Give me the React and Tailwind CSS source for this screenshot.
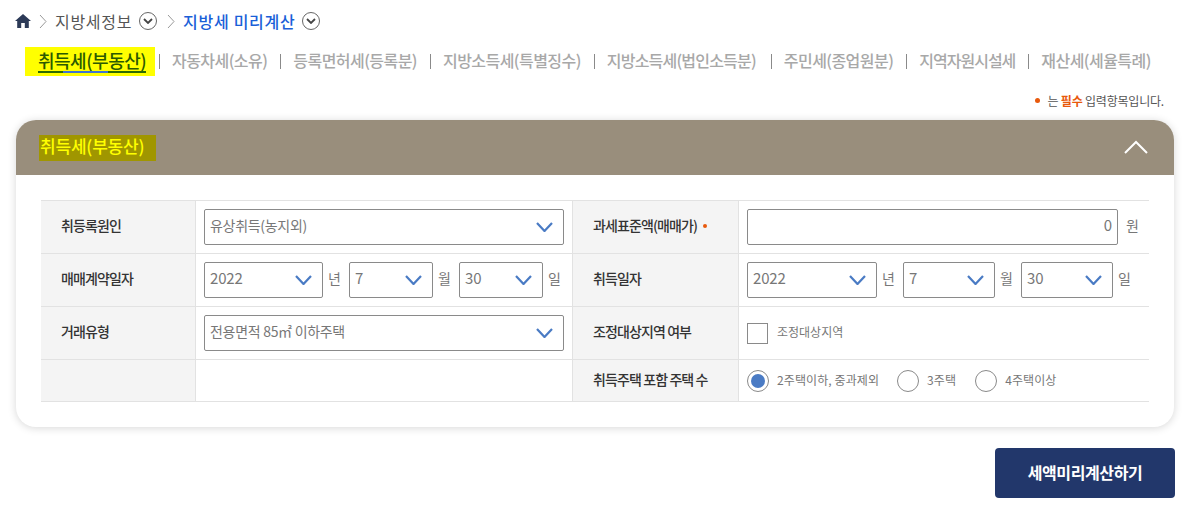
import React from 'react';

const tabs = [
  { label: '자동차세(소유)', cls: 'mr-[9px] tracking-[-0.55px]' },
  { label: '등록면허세(등록분)', cls: 'mr-[9px] tracking-[-0.55px]' },
  { label: '지방소득세(특별징수)', cls: 'mr-[9px] tracking-[-0.55px]' },
  { label: '지방소득세(법인소득분)', cls: 'mr-[11px] tracking-[-0.8px]' },
  { label: '주민세(종업원분)', cls: 'mr-[9px] tracking-[-0.55px]' },
  { label: '지역자원시설세', cls: 'mr-[9px] tracking-[-1px]' },
  { label: '재산세(세율특례)', cls: 'mr-[9px] tracking-[-0.55px]' },
];

function Crumb({ children, active, className }) {
  return (
    <div className={`flex items-center ${className}`}>
      <svg viewBox="0 0 8 15" className="w-2 h-[15px] fill-none stroke-[#999]" strokeWidth="1">
        <path d="M1 1 L7 7.5 L1 14" />
      </svg>
      <span className={active ? 'ml-2 text-[16px] font-medium tracking-[0.7px] text-[#1a5fd8]' : 'ml-2 text-[16px] tracking-[0.7px] text-[#555]'}>{children}</span>
      <span className="ml-[7px] w-[18px] h-[18px] rounded-full border border-[#666] flex items-center justify-center">
        <svg viewBox="0 0 10 6" className="w-[10px] h-[6px] fill-none stroke-[#444]" strokeWidth="1.8">
          <path d="M1 1 L5 5 L9 1" />
        </svg>
      </span>
    </div>
  );
}

function Select({ value, className, digits }) {
  return (
    <div className={`h-9 flex items-center justify-between border border-[#8a8a8a] rounded-[2px] pl-[5px] pr-[10px] bg-white ${className}`}>
      <span className={digits ? 'pb-[3px] text-[15px] tracking-[-0.2px] text-[#777]' : 'pb-[3px] text-[14px] tracking-[-0.3px] text-[#777]'}>{value}</span>
      <svg viewBox="0 0 17 10" className="w-[17px] h-[10px] fill-none stroke-[#4a7bc4]" strokeWidth="2.2">
        <path d="M1 1 L8.5 9 L16 1" />
      </svg>
    </div>
  );
}

function Label({ children }) {
  return (
    <div className="bg-[#f4f4f4] flex items-center pl-5 pb-[3px] border-b border-r border-[#e2e2e2] text-[14px] font-medium tracking-[-0.9px] text-[#333]">
      {children}
    </div>
  );
}

function Cell({ children, last }) {
  return <div className={`flex items-center pl-2 border-b border-[#e2e2e2] ${last ? '' : 'pr-2 border-r'}`}>{children}</div>;
}

function Unit({ children }) {
  return <span className="pb-[3px] text-[14px] text-[#777] shrink-0">{children}</span>;
}

function DateSelect({ wide }) {
  return (
    <div className="flex items-center w-full">
      <Select digits value="2022" className={wide ? 'w-[130px]' : 'w-[119px]'} />
      <span className="flex ml-[5px] w-[21px]"><Unit>년</Unit></span>
      <Select digits value="7" className={wide ? 'w-[92px]' : 'w-[84px]'} />
      <span className="flex ml-[5px] w-[21px]"><Unit>월</Unit></span>
      <Select digits value="30" className={wide ? 'w-[92px]' : 'w-[84px]'} />
      <span className="flex ml-[5px]"><Unit>일</Unit></span>
    </div>
  );
}

function Radio({ label, checked, className }) {
  return (
    <div className={`flex items-center ${className}`}>
      <span className="w-[22px] h-[22px] rounded-full border border-[#8a8a8a] flex items-center justify-center bg-white">
        {checked && <span className="w-[14px] h-[14px] rounded-full bg-[#4a7bc4]" />}
      </span>
      <span className="ml-2 pb-[2px] text-[12px] tracking-[0.1px] text-[#777]">{label}</span>
    </div>
  );
}

export default function App() {
  return (
    <div className="w-[1192px] h-[517px] overflow-hidden bg-white font-['Noto_Sans_CJK_KR','Noto_Sans',sans-serif]">
      {/* Breadcrumb */}
      <div className="h-[42px] pl-[15px] flex items-center">
        <svg viewBox="0 0 16 14" className="w-4 h-[14px] fill-[#2c3a57]">
          <path d="M8 0 L16 7 L13.8 7 L13.8 14 L9.8 14 L9.8 9 L6.2 9 L6.2 14 L2.2 14 L2.2 7 L0 7 Z" />
        </svg>
        <Crumb className="ml-2">지방세정보</Crumb>
        <Crumb active className="ml-[10px]">지방세 미리계산</Crumb>
      </div>

      {/* Tabs */}
      <div className="h-[38px] pl-[25px] flex items-center">
        <div className="h-[29px] w-[130px] pl-[13px] bg-[#ffff00] flex items-center">
          <div className="w-[108px]">
            <div className="text-[18px] font-medium tracking-[-0.5px] text-[#2c5a00] leading-[21px] whitespace-nowrap">취득세(부동산)</div>
            <div className="flex h-[2px]">
              <span className="w-[25px] bg-[#2c6a00]" />
              <span className="w-[45px] bg-[#3f74d0]" />
              <span className="w-[38px] bg-[#2c6a00]" />
            </div>
          </div>
        </div>
        {tabs.map(t => (
          <div key={t.label} className="flex items-center">
            <span className="ml-[4px] mr-[12px] w-px h-[15px] bg-[#8a8a8a]" />
            <span className={`pb-[2px] text-[16px] font-medium text-[#a8a8a8] ${t.cls}`}>{t.label}</span>
          </div>
        ))}
      </div>

      {/* Required note */}
      <div className="h-[40px] pt-[12px] pr-[28px] flex justify-end items-start">
        <div className="flex items-center text-[12px] tracking-[-0.2px] text-[#555] leading-[17px]">
          <span className="w-[5px] h-[5px] rounded-full bg-[#e8590c] mr-[7px]" />
          는&nbsp;<span className="font-bold text-[#e8590c]">필수</span>&nbsp;입력항목입니다.
        </div>
      </div>

      {/* Card */}
      <div className="ml-4 w-[1158px] h-[307px] rounded-[20px] bg-white shadow-[0_1px_8px_rgba(0,0,0,0.16)] overflow-hidden">
        <div className="h-[55px] bg-[#998e7c] pl-[23px] pr-[26px] flex items-center justify-between">
          <span className="h-[26px] w-[117px] bg-[#a09600] flex items-center pl-[1px] pb-[3px] text-[17px] font-medium tracking-[-0.2px] text-[#ffff00] whitespace-nowrap">취득세(부동산)</span>
          <svg viewBox="0 0 24 14" className="w-6 h-[14px] mb-[1px] fill-none stroke-white" strokeWidth="2">
            <path d="M1 13 L12 2 L23 13" />
          </svg>
        </div>

        <div className="mx-[25px] mt-[25px] border-t border-[#e2e2e2] grid grid-cols-[155px_377px_166px_1fr] grid-rows-[53px_53px_53px_42px]">
          <Label>취등록원인</Label>
          <Cell><Select value="유상취득(농지외)" className="w-full" /></Cell>
          <Label>
            과세표준액(매매가)
            <span className="ml-[6px] w-1 h-1 rounded-full bg-[#e8590c]" />
          </Label>
          <Cell last>
            <div className="w-[371px] h-9 border border-[#8a8a8a] rounded-[2px] flex items-center justify-end pr-[5px] pb-[3px] text-[15px] text-[#777]">0</div>
            <span className="flex ml-[8px]"><Unit>원</Unit></span>
          </Cell>

          <Label>매매계약일자</Label>
          <Cell><DateSelect /></Cell>
          <Label>취득일자</Label>
          <Cell last><DateSelect wide /></Cell>

          <Label>거래유형</Label>
          <Cell><Select value="전용면적 85㎡ 이하주택" className="w-full" /></Cell>
          <Label>조정대상지역 여부</Label>
          <Cell last>
            <span className="w-[21px] h-[21px] border border-[#8a8a8a] bg-white" />
            <span className="ml-[9px] pb-[2px] text-[12px] text-[#777]">조정대상지역</span>
          </Cell>

          <Label />
          <Cell />
          <Label>취득주택 포함 주택 수</Label>
          <Cell last>
            <Radio checked label="2주택이하, 중과제외" />
            <Radio label="3주택" className="ml-[18px]" />
            <Radio label="4주택이상" className="ml-[19px]" />
          </Cell>
        </div>
      </div>

      {/* Submit */}
      <div className="mt-[21px] pr-[17px] flex justify-end">
        <button className="w-[180px] h-[50px] pb-[3px] rounded-[4px] bg-[#22376b] text-white text-[16px] font-bold tracking-[-0.4px]">세액미리계산하기</button>
      </div>
    </div>
  );
}
